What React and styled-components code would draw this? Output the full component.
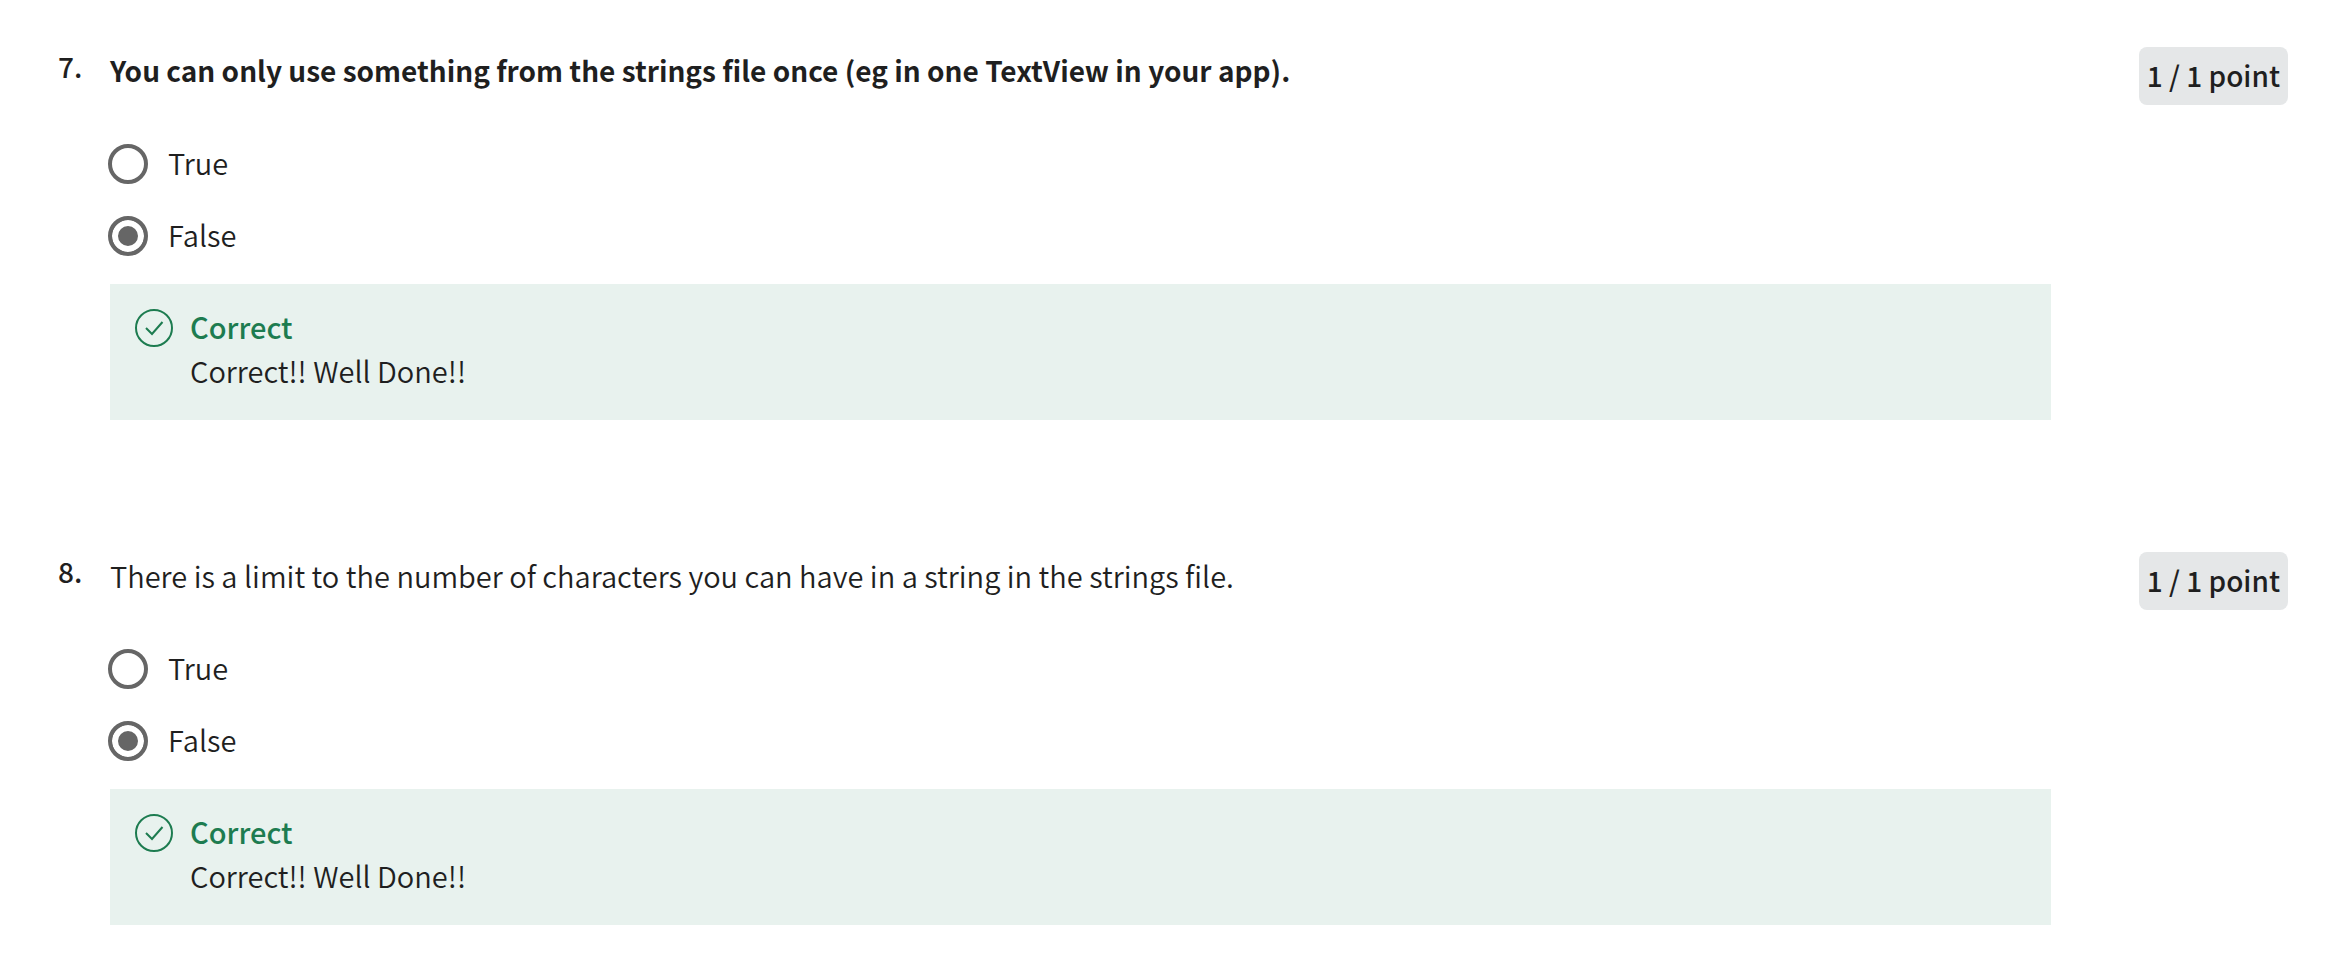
import React from 'react';
import styled, { createGlobalStyle } from 'styled-components';

const GlobalStyle = createGlobalStyle`
  *, *::before, *::after { box-sizing: border-box; }
  body {
    margin: 0;
    background: #fff;
    color: #1f1f1f;
    font-family: "Noto Sans CJK SC", "Noto Sans", sans-serif;
    font-size: 29px;
    line-height: 44px;
  }
`;

const Quiz = styled.main`
  display: flex;
  flex-direction: column;
  gap: 132px;
  padding: 47px 58px 0;
`;

const Question = styled.section`
  display: grid;
  grid-template-columns: 52px minmax(0, 1fr) 237px;
`;

const Ordinal = styled.span`
  font-size: 28px;
  font-weight: 500;
  line-height: 38px;
`;

const Body = styled.fieldset`
  min-width: 0;
  margin: 0;
  padding: 0;
  border: 0;
`;

const Prompt = styled.legend`
  padding: 1px 0 52px;
  font-size: ${({ $strong }) => ($strong ? 28 : 29)}px;
  font-weight: ${({ $strong }) => ($strong ? 700 : 350)};
`;

const Options = styled.div`
  display: flex;
  flex-direction: column;
  gap: 32px;
`;

const Option = styled.label`
  display: flex;
  align-items: center;
  gap: 20px;
  height: 40px;
  font-weight: 350;
`;

const OptionText = styled.span`
  padding-bottom: 5px;
`;

const Radio = styled.input`
  appearance: none;
  flex: none;
  width: 40px;
  height: 40px;
  margin: 0 0 0 -2px;
  border: 4px solid #666;
  border-radius: 50%;
  background: ${({ checked }) => (checked ? '#666' : '#fff')};
  box-shadow: inset 0 0 0 6px #fff;
`;

const Feedback = styled.div`
  display: flex;
  gap: 16px;
  margin-top: 28px;
  padding: 20px 24px 28px;
  background: #e8f2ee;
`;

const CheckIcon = styled.svg`
  flex: none;
  width: 40px;
  height: 40px;
  margin-top: 4px;
`;

const FeedbackTitle = styled.strong`
  display: block;
  color: #1d7c50;
  font-weight: 500;
`;

const FeedbackText = styled.p`
  margin: 0;
  font-weight: 350;
`;

const Score = styled.span`
  justify-self: end;
  align-self: start;
  padding: 6px 8px 8px;
  border-radius: 8px;
  background: #e5e7e8;
  font-size: 28px;
  font-weight: 500;
`;

const questions = [
  { number: 7, strong: true, text: 'You can only use something from the strings file once (eg in one TextView in your app).' },
  { number: 8, strong: false, text: 'There is a limit to the number of characters you can have in a string in the strings file.' },
];

function QuestionItem({ number, strong, text }) {
  const [answer, setAnswer] = React.useState('False');
  return (
    <Question>
      <Ordinal>{number}.</Ordinal>
      <Body>
        <Prompt $strong={strong}>{text}</Prompt>
        <Options>
          {['True', 'False'].map((label) => (
            <Option key={label}>
              <Radio
                type="radio"
                name={`question-${number}`}
                value={label}
                checked={answer === label}
                onChange={() => setAnswer(label)}
              />
              <OptionText>{label}</OptionText>
            </Option>
          ))}
        </Options>
        <Feedback>
          <CheckIcon viewBox="0 0 40 40" fill="none" stroke="#1d7c50" strokeWidth="2" aria-hidden="true">
            <circle cx="20" cy="20" r="18" />
            <path d="M12 20 18 26 28.500 14" />
          </CheckIcon>
          <div>
            <FeedbackTitle>Correct</FeedbackTitle>
            <FeedbackText>Correct!! Well Done!!</FeedbackText>
          </div>
        </Feedback>
      </Body>
      <Score>1 / 1 point</Score>
    </Question>
  );
}

export default function App() {
  return (
    <>
      <GlobalStyle />
      <Quiz>
        {questions.map((question) => (
          <QuestionItem key={question.number} {...question} />
        ))}
      </Quiz>
    </>
  );
}
